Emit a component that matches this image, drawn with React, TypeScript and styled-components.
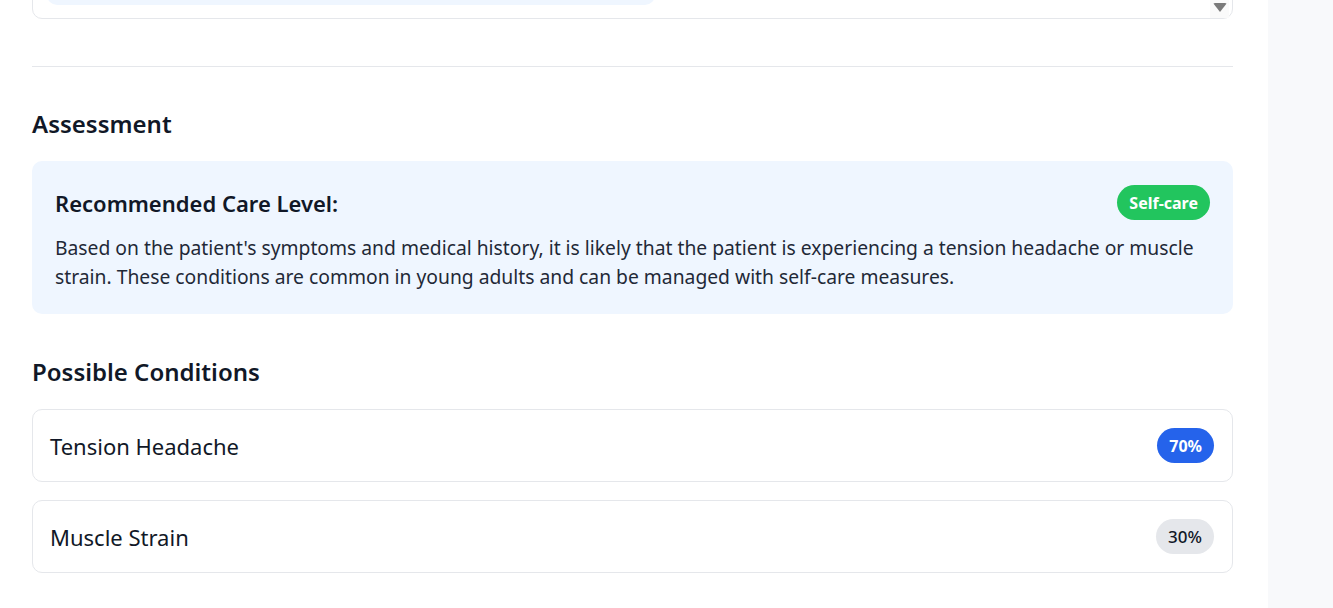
import React from 'react';
import styled, {createGlobalStyle} from 'styled-components';

type Condition = {
    name: string;
    probability: number;
};

const conditions: Condition[] = [
    {name: 'Tension Headache', probability: 70},
    {name: 'Muscle Strain', probability: 30},
];

const App = () => {
    return (
        <>
            <GlobalStyle/>
            <Page>
                <Main>
                    <ChatCard>
                        <Messages>
                            <Bubble/>
                        </Messages>
                        <Scrollbar>
                            <ScrollArrow/>
                        </Scrollbar>
                    </ChatCard>

                    <Divider/>

                    <SectionTitle>Assessment</SectionTitle>
                    <CareBox>
                        <CareHeader>
                            <CareTitle>Recommended Care Level:</CareTitle>
                            <Pill $tone='green'>Self-care</Pill>
                        </CareHeader>
                        <CareText>
                            Based on the patient's symptoms and medical history, it is likely that the patient is experiencing a tension headache or muscle strain. These conditions are common in young adults and can be managed with self-care measures.
                        </CareText>
                    </CareBox>

                    <SectionTitle $top={42}>Possible Conditions</SectionTitle>
                    <ConditionList>
                        {conditions.map((c, i) => (
                            <ConditionRow key={c.name}>
                                <ConditionName>{c.name}</ConditionName>
                                <Pill $tone={i === 0 ? 'blue' : 'gray'}>{c.probability}%</Pill>
                            </ConditionRow>
                        ))}
                    </ConditionList>
                </Main>
                <Sidebar/>
            </Page>
        </>
    );
};

const GlobalStyle = createGlobalStyle`
    html, body {
        margin: 0;
        padding: 0;
        background: #ffffff;
        font-family: "Noto Sans", "Open Sans", sans-serif;
        color: #111827;
        overflow: hidden;
    }
`;

const Page = styled.div`
    display: flex;
    height: 608px;
    overflow: hidden;
`;

const Main = styled.main`
    flex: 1;
    padding: 0 35px 0 32px;
    display: flex;
    flex-direction: column;
`;

const Sidebar = styled.aside`
    width: 65px;
    background: #f8f9fb;
`;

const ChatCard = styled.div`
    margin-top: -101px;
    height: 120px;
    box-sizing: border-box;
    border: 1px solid #e5e7eb;
    border-radius: 10px;
    display: flex;
    padding: 0 3px 0 14px;
`;

const Messages = styled.div`
    flex: 1;
    display: flex;
    align-items: flex-end;
    padding-bottom: 13px;
`;

const Bubble = styled.div`
    width: 608px;
    height: 60px;
    background: #eff6ff;
    border-radius: 10px;
`;

const Scrollbar = styled.div`
    width: 19px;
    height: 118px;
    background: #fafafa;
    display: flex;
    align-items: flex-end;
    justify-content: center;
    padding-bottom: 6px;
    box-sizing: border-box;
`;

const ScrollArrow = styled.div`
    width: 0;
    height: 0;
    border-left: 7px solid transparent;
    border-right: 7px solid transparent;
    border-top: 9px solid #7a7a7a;
    border-radius: 2px;
`;

const Divider = styled.hr`
    border: none;
    border-top: 1px solid #e5e7eb;
    margin: 47px 0 0 0;
`;

const SectionTitle = styled.h2<{$top?: number}>`
    margin: ${p => p.$top ?? 41}px 0 21px 0;
    font-size: 24px;
    line-height: 32px;
    font-weight: 600;
    color: #111827;
`;

const CareBox = styled.div`
    background: #eff6ff;
    border-radius: 10px;
    padding: 24px 23px 23px 23px;
`;

const CareHeader = styled.div`
    display: flex;
    align-items: center;
    justify-content: space-between;
`;

const CareTitle = styled.h3`
    margin: 0;
    font-size: 22px;
    line-height: 30px;
    font-weight: 600;
    color: #111827;
`;

const CareText = styled.p`
    margin: 13px 0 0 0;
    font-size: 19.3px;
    line-height: 29px;
    color: #1f2937;
`;

const ConditionList = styled.div`
    display: flex;
    flex-direction: column;
    gap: 18px;
`;

const ConditionRow = styled.div`
    display: flex;
    align-items: center;
    justify-content: space-between;
    height: 73px;
    box-sizing: border-box;
    padding: 0 18px 0 17px;
    border: 1px solid #e5e7eb;
    border-radius: 10px;
`;

const ConditionName = styled.span`
    font-size: 22px;
    color: #111827;
`;

const tones = {
    green: {bg: '#22c55e', fg: '#ffffff', weight: 700, size: 16},
    blue: {bg: '#2563eb', fg: '#ffffff', weight: 700, size: 16},
    gray: {bg: '#e5e7eb', fg: '#111827', weight: 500, size: 17},
};

const Pill = styled.span<{$tone: keyof typeof tones}>`
    display: inline-flex;
    align-items: center;
    height: 35px;
    padding: 0 12px;
    border-radius: 999px;
    font-size: ${p => tones[p.$tone].size}px;
    font-weight: ${p => tones[p.$tone].weight};
    background: ${p => tones[p.$tone].bg};
    color: ${p => tones[p.$tone].fg};
`;

export default App;
